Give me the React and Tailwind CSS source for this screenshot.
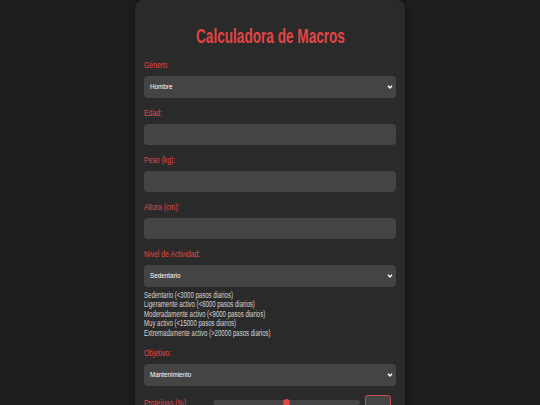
import React from 'react';

// Text in the reference is horizontally condensed, so text spans get a scale-x
const Label = ({ children, className = '' }) => (
  <label className={`block text-[9.8px] leading-[12px] text-[#e44848] ${className}`}>
    <span className="inline-block origin-left scale-x-[0.7] whitespace-nowrap">{children}</span>
  </label>
);

const Chevron = () => (
  <svg
    className="pointer-events-none absolute right-[3px] top-1/2 -translate-y-1/2"
    width="6"
    height="5"
    viewBox="0 0 6 5"
  >
    <path d="M1 1.2 L3 3.5 L5 1.2" stroke="#ffffff" strokeWidth="1.4" fill="none" />
  </svg>
);

const Select = ({ options }) => (
  <div className="relative">
    <select
      defaultValue={options[0]}
      className="block w-full h-[22px] appearance-none rounded-[4px] bg-[#444444] pl-[6px] text-[6.3px] text-white outline-none"
    >
      {options.map((o) => (
        <option key={o}>{o}</option>
      ))}
    </select>
    <Chevron />
  </div>
);

const Input = () => (
  <input
    type="number"
    className="block w-full h-[21px] rounded-[4px] bg-[#444444] px-[6px] text-[7px] text-white outline-none"
  />
);

const Field = ({ label, children }) => (
  <div className="mb-[9px]">
    <Label className="mb-[5px]">{label}</Label>
    {children}
  </div>
);

const activityNotes = [
  'Sedentario (<3000 pasos diarios)',
  'Ligeramente activo (<6000 pasos diarios)',
  'Moderadamente activo (<9000 pasos diarios)',
  'Muy activo (<15000 pasos diarios)',
  'Extremadamente activo (>20000 pasos diarios)',
];

export default function App() {
  return (
    <div className="min-h-screen bg-[#1e1e1e] font-['Liberation_Sans',Arial,sans-serif]">
      <div className="mx-auto w-[270px] rounded-lg bg-[#2a2a2a] px-[9px] pt-[24px] pb-6 shadow-[0_0_6px_rgba(0,0,0,0.5)]">
        {/* Title */}
        <h1 className="mb-[10.5px] text-center text-[20px] leading-[24px] font-bold text-[#e24545]">
          <span className="inline-block scale-x-[0.68] whitespace-nowrap">Calculadora de Macros</span>
        </h1>

        <Field label="Género:">
          <Select options={['Hombre', 'Mujer']} />
        </Field>

        <Field label="Edad:">
          <Input />
        </Field>

        <Field label="Peso (kg):">
          <Input />
        </Field>

        <Field label="Altura (cm):">
          <Input />
        </Field>

        <Field label="Nivel de Actividad:">
          <Select
            options={['Sedentario', 'Ligeramente activo', 'Moderadamente activo', 'Muy activo', 'Extremadamente activo']}
          />
          <div className="mt-[4.5px] mb-[2px] text-[8.4px] text-[#d6d6d6]">
            <div className="origin-left scale-x-[0.72] whitespace-nowrap">
              {activityNotes.map((n) => (
                <div key={n} className="h-[9.4px] leading-[9.4px]">
                  {n}
                </div>
              ))}
            </div>
          </div>
        </Field>

        <Field label="Objetivo:">
          <Select options={['Mantenimiento', 'Déficit', 'Superávit']} />
        </Field>

        {/* Macro split row */}
        <div className="mt-[3px] flex items-start">
          <Label className="w-[69px] pt-[2px]">Proteínas (%):</Label>
          <div className="relative mt-[4.7px] h-[5px] w-[147px] rounded-full bg-[#444444]">
            <div className="absolute left-[70px] top-[-1px] h-[7px] w-[7px] rounded-full bg-[#e04646]" />
          </div>
          <input
            type="number"
            className="ml-[5px] h-[20px] w-[26px] rounded-[3px] border border-[#c85050] bg-[#444444] text-[7px] text-white outline-none"
          />
        </div>
      </div>
    </div>
  );
}
